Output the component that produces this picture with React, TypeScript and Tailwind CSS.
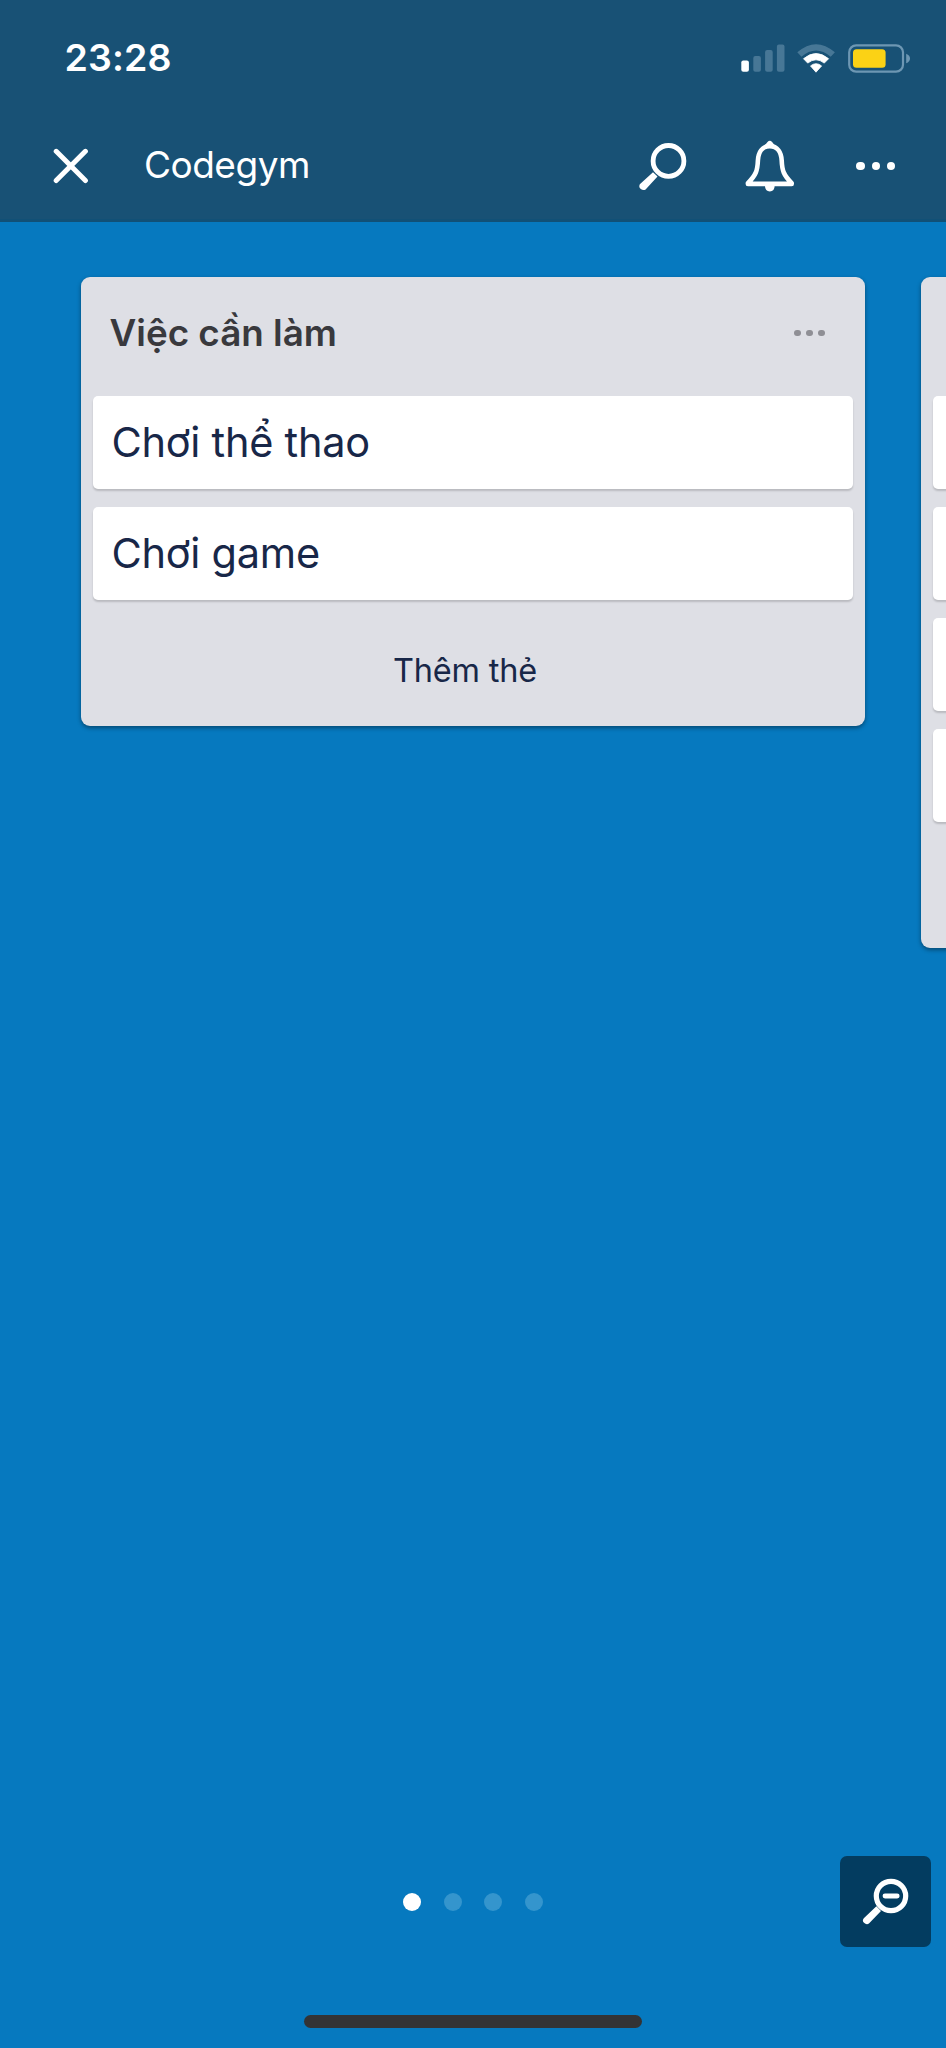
function SignalIcon() {
  return (
    <svg width="44" height="28" viewBox="741 44.5 44 28" className="shrink-0">
      <rect x="741.3" y="61" width="7.6" height="11.2" rx="2" fill="#fff" />
      <rect x="753.3" y="56.5" width="7.6" height="15.7" rx="2" fill="#477796" />
      <rect x="765.1" y="50.5" width="7.6" height="21.7" rx="2" fill="#477796" />
      <rect x="776.9" y="44.9" width="7.6" height="27.3" rx="2" fill="#477796" />
    </svg>
  );
}

function WifiIcon() {
  return (
    <svg width="38" height="29" viewBox="797.3 43.5 38 29" className="ml-3 shrink-0">
      <path d="M797.6 51.8Q816.3 35.5 835.2 51.8L831 56.2Q816.3 43.6 801.8 56.2Z" fill="#477796" />
      <path d="M803.8 58.2Q816.3 47.8 828.9 58.2L824.6 62.6Q816.3 56 808 62.6Z" fill="#fff" stroke="#fff" strokeWidth="0.8" strokeLinejoin="round" />
      <path d="M810.8 65.4Q816.3 61 821.9 65.4L816.3 71.7Z" fill="#fff" stroke="#fff" strokeWidth="0.8" strokeLinejoin="round" />
    </svg>
  );
}

function BatteryIcon() {
  return (
    <svg width="63" height="29" viewBox="848 43.5 63 29" className="ml-[13px] shrink-0">
      <rect x="849.2" y="44.8" width="53.8" height="26.4" rx="7" fill="none" stroke="#6d97b3" strokeWidth="2.2" />
      <rect x="853" y="48.7" width="32.6" height="18.6" rx="3.5" fill="#fbd215" />
      <path d="M906.2 53.2Q910 54.8 910 58Q910 61.2 906.2 62.8Z" fill="#6d97b3" />
    </svg>
  );
}

function CloseIcon() {
  return (
    <svg width="36" height="36" viewBox="53 148 36 36" className="shrink-0">
      <path d="M56.2 151.3L85.4 180.5M85.4 151.3L56.2 180.5" stroke="#fff" strokeWidth="5" strokeLinecap="round" />
    </svg>
  );
}

function SearchIcon() {
  return (
    <svg width="49" height="50" viewBox="638 141 49 50" className="shrink-0">
      <circle cx="668.5" cy="160.9" r="15.4" fill="none" stroke="#fff" strokeWidth="4.8" />
      <path d="M653 172.2L639.8 184.2Q638.4 187.2 640.8 189Q643.3 191 645.6 189.4L657.5 176.5Z" fill="#fff" />
    </svg>
  );
}

function BellIcon() {
  return (
    <svg width="50" height="52" viewBox="744.5 140.5 50 52" className="ml-[58px] shrink-0">
      <path
        d="M769.3 146.6C761.5 146.6 757.8 153 757.4 161C757 171 755.6 175.5 747.4 183.6V184.4H791.2V183.6C783 175.5 781.6 171 781.2 161C780.8 153 777.1 146.6 769.3 146.6Z"
        fill="none"
        stroke="#fff"
        strokeWidth="4.6"
        strokeLinejoin="round"
      />
      <path d="M764.2 146L767 142.4Q769.3 140 771.6 142.4L774.4 146Z" fill="#fff" />
      <path d="M764.4 186H774.2Q774 191.9 769.3 191.9Q764.6 191.9 764.4 186Z" fill="#fff" />
    </svg>
  );
}

function ZoomOutIcon() {
  return (
    <svg width="48" height="48" viewBox="862 1878 48 48" className="shrink-0">
      <circle cx="891" cy="1896" r="14.7" fill="none" stroke="#fff" strokeWidth="5.2" />
      <path d="M885 1896H897.2" stroke="#fff" strokeWidth="4.8" strokeLinecap="round" />
      <path d="M876.4 1906.3L863.8 1918.2Q861.8 1920.8 864 1922.8Q866.6 1925.2 869.2 1923.3L881 1911Z" fill="#fff" />
    </svg>
  );
}

function MenuDots({ className, dot }: { className: string; dot: string }) {
  return (
    <div className={`flex shrink-0 items-center ${className}`}>
      {[0, 1, 2].map((i) => (
        <span key={i} className={`rounded-full ${dot}`} />
      ))}
    </div>
  );
}

function Card({ text }: { text?: string }) {
  return (
    <li className="flex h-[93px] items-center rounded-[5px] bg-white pl-[18.5px] text-[41.5px] text-[#182748] shadow-[0_2px_2px_rgba(0,0,0,0.17)]">
      {text && <span className="whitespace-nowrap tracking-[-0.25px]">{text}</span>}
    </li>
  );
}

function List({ title, cards, add }: { title?: string; cards: (string | undefined)[]; add?: string }) {
  return (
    <section className="w-[784px] shrink-0 rounded-[9px] bg-[#dedfe5] shadow-[0_2px_4px_rgba(0,0,0,0.4)]">
      <header className="flex h-[119px] items-center justify-between pr-[40px] pb-[7px] pl-[28.5px]">
        <h2 className="text-[36.8px] font-semibold whitespace-nowrap text-[#39393d]">{title}</h2>
        <MenuDots className="gap-[5.6px]" dot="size-[6.6px] bg-[#8f8f95]" />
      </header>
      <ul className="flex flex-col gap-[18px] px-3">
        {cards.map((c, i) => (
          <Card key={i} text={c} />
        ))}
      </ul>
      <div className="flex h-[126px] items-center justify-center pt-[17px] text-[32.5px] tracking-[-0.2px] text-[#182748]">
        {add && <button className="mr-[16px] whitespace-nowrap">{add}</button>}
      </div>
    </section>
  );
}

export default function App() {
  return (
    <div className="flex h-[2048px] w-full flex-col overflow-hidden bg-[#0679bf] font-['Inter','Noto_Sans',sans-serif] text-white">
      <div className="h-[222px] shrink-0 border-b-[3px] border-[#115076] bg-[#185175]">
        <div className="flex h-[116px] items-center justify-between pr-[35px] pl-[64.5px]">
          <span className="pt-px text-[37.5px] font-semibold tracking-[0.1px]">23:28</span>
          <div className="flex items-center">
            <SignalIcon />
            <WifiIcon />
            <BatteryIcon />
          </div>
        </div>
        <nav className="flex h-[100px] items-center pr-[51px] pl-[53px]">
          <CloseIcon />
          <h1 className="ml-[55px] pb-[2px] text-[37px] font-normal tracking-[-0.5px]">Codegym</h1>
          <div className="ml-auto flex items-center">
            <SearchIcon />
            <BellIcon />
            <MenuDots className="ml-[61px] gap-[7px]" dot="size-[8.2px] bg-white" />
          </div>
        </nav>
      </div>

      <main className="flex flex-1 items-start gap-14 overflow-hidden pt-[55px] pl-[81px]">
        <List title="Việc cần làm" cards={["Chơi thể thao", "Chơi game"]} add="Thêm thẻ" />
        <List cards={[undefined, undefined, undefined, undefined]} />
      </main>

      <footer className="shrink-0">
        <div className="grid h-[91px] grid-cols-[1fr_auto_1fr] items-center px-[15px]">
          <span />
          <div className="flex items-center gap-[22.4px]">
            <span className="size-[18px] rounded-full bg-white" />
            <span className="size-[18px] rounded-full bg-[#3495cd]" />
            <span className="size-[18px] rounded-full bg-[#3495cd]" />
            <span className="size-[18px] rounded-full bg-[#3495cd]" />
          </div>
          <button className="flex size-[91px] items-center justify-center justify-self-end rounded-[7px] bg-[#033c60]">
            <ZoomOutIcon />
          </button>
        </div>
        <div className="mx-auto mt-[68px] mb-5 h-[13px] w-[338px] rounded-full bg-[#333335]" />
      </footer>
    </div>
  );
}
